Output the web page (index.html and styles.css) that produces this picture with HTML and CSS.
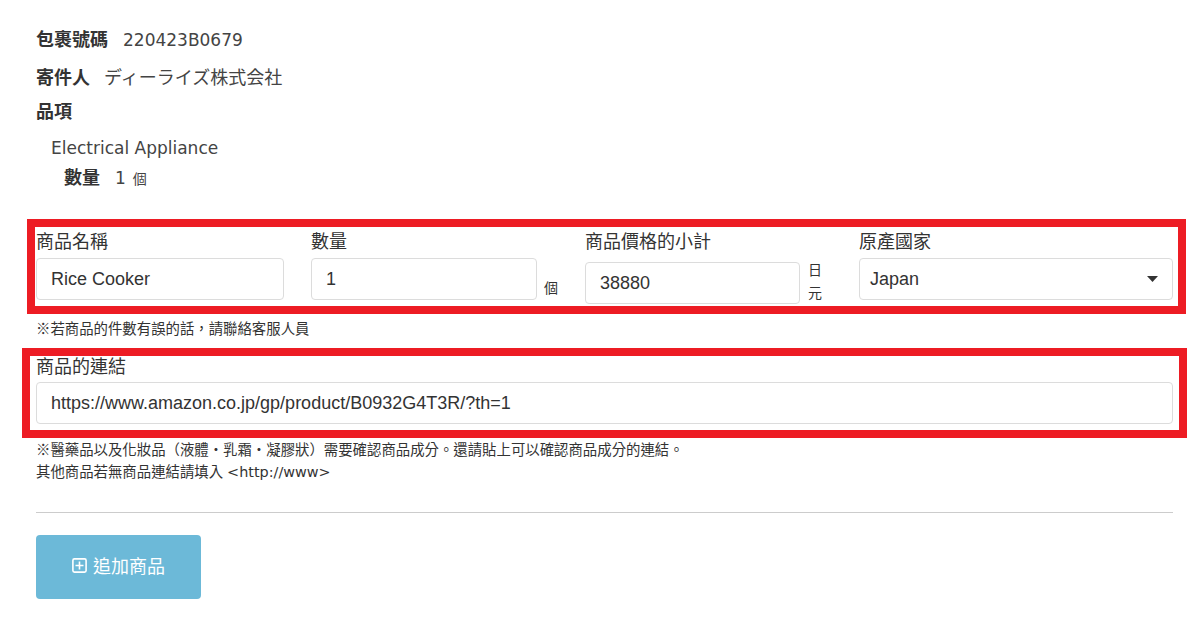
FILE: index.html
```html
<!DOCTYPE html>
<html lang="zh-Hant">
<head>
<meta charset="utf-8">
<title>商品資訊</title>
<link rel="stylesheet" href="styles.css">
</head>
<body>
<div class="page">
  <div class="info">
    <div class="info-row"><span class="k">包裹號碼</span><span class="v">220423B0679</span></div>
    <div class="info-row gap"><span class="k">寄件人</span><span class="v jp" lang="ja">ディーライズ株式会社</span></div>
    <div class="info-row gap"><span class="k">品項</span></div>
    <div class="item-name">Electrical Appliance</div>
    <div class="item-qty"><span class="k">數量</span><span class="qv">1</span><span class="qu">個</span></div>
  </div>

  <div class="hl hl-items">
    <div class="grid">
      <div class="field">
        <label class="lbl">商品名稱</label>
        <div class="ctrl"><input class="inp w1" type="text" value="Rice Cooker"></div>
      </div>
      <div class="field">
        <label class="lbl">數量</label>
        <div class="ctrl"><input class="inp w2" type="text" value="1"><span class="unit">個</span></div>
      </div>
      <div class="field">
        <label class="lbl">商品價格的小計</label>
        <div class="ctrl"><input class="inp w3" type="text" value="38880"><span class="unit unit-stack">日元</span></div>
      </div>
      <div class="field">
        <label class="lbl">原產國家</label>
        <div class="select-wrap">
          <div class="inp sel">Japan</div>
          <svg class="caret" width="11" height="6" viewBox="0 0 11 6"><path d="M0 0H11L5.5 6Z" fill="#333"/></svg>
        </div>
      </div>
    </div>
  </div>
  <div class="note note1">※若商品的件數有誤的話，請聯絡客服人員</div>

  <div class="hl hl-link">
    <label class="lbl lbl-link">商品的連結</label>
    <input class="inp wfull" type="text" value="https://www.amazon.co.jp/gp/product/B0932G4T3R/?th=1">
  </div>
  <div class="note">※醫藥品以及化妝品（液體・乳霜・凝膠狀）需要確認商品成分。還請貼上可以確認商品成分的連結。</div>
  <div class="note">其他商品若無商品連結請填入<span class="lat">&lt;http://www&gt;</span></div>

  <div class="rule"></div>

  <button class="btn" type="button">
    <svg class="plus" width="15" height="15" viewBox="0 0 15 15"><rect x="0.9" y="0.9" width="13.2" height="13.2" rx="1.5" fill="none" stroke="#fff" stroke-width="1.6"/><path d="M7.5 3.5V11.5M3.5 7.5H11.5" stroke="#fff" stroke-width="1.6"/></svg>
    <span>追加商品</span>
  </button>
</div>
</body>
</html>
```
FILE: styles.css
```css
body {
  margin: 0;
  background: #fff;
  color: #333;
  font-family: "DejaVu Sans", "Noto Sans CJK TC", sans-serif;
}

.page {
  padding: 28px 26px 0 36px;
}

.info-row {
  display: flex;
  align-items: baseline;
  font-size: 17px;
  line-height: 24px;
  height: 24px;
}

.info-row.gap {
  margin-top: 12px;
}

.k {
  font-weight: 700;
  font-size: 18px;
  color: #333;
}

.v {
  margin-left: 15px;
  color: #444;
}

.jp {
  font-family: "Noto Sans CJK JP", sans-serif;
  font-size: 18px;
  margin-left: 14px;
}

.item-name {
  margin-top: 12px;
  padding-left: 15px;
  font-size: 17px;
  line-height: 24px;
  color: #444;
}

.item-qty {
  margin-top: 6px;
  padding-left: 28px;
  display: flex;
  align-items: baseline;
  font-size: 17px;
  line-height: 24px;
}

.qv {
  margin-left: 15px;
  color: #444;
}

.qu {
  margin-left: 7px;
  font-size: 14px;
  color: #444;
  font-family: "Noto Sans CJK TC", sans-serif;
}

.hl {
  border: 8px solid #ed1c24;
}

.hl-items {
  margin: 29px -13px 0 -9px;
  padding: 3px 5px 6px 1px;
  height: 70px;
}

.grid {
  display: grid;
  grid-template-columns: 275px 274px 274px 1fr;
  align-items: start;
}

.lbl {
  display: block;
  font-family: "Liberation Sans", "Noto Sans CJK TC", sans-serif;
  font-size: 18px;
  line-height: 24px;
  height: 24px;
  margin-bottom: 4px;
  color: #333;
}

.ctrl {
  display: flex;
  align-items: flex-end;
}

.inp {
  box-sizing: border-box;
  height: 42px;
  border: 1px solid #dcdcdc;
  border-radius: 4px;
  padding: 0 14px;
  margin: 0;
  font-family: "Liberation Sans", sans-serif;
  font-size: 18px;
  color: #333;
  background: #fff;
  outline: none;
}

.w1 { width: 248px; }
.w2 { width: 226px; }
.w3 { width: 215px; }

.unit {
  margin-left: 7px;
  margin-bottom: 3px;
  font-family: "Noto Sans CJK TC", sans-serif;
  font-size: 14px;
  line-height: 20px;
  color: #333;
}

.unit-stack {
  width: 14px;
  margin-left: 8px;
  margin-bottom: 0;
  line-height: 23px;
}

.select-wrap {
  position: relative;
}

.sel {
  display: flex;
  align-items: center;
  width: 100%;
  padding-left: 10px;
}

.caret {
  position: absolute;
  right: 15px;
  top: 18px;
}

.note {
  font-family: "Noto Sans CJK TC", sans-serif;
  font-size: 14.4px;
  line-height: 22px;
  color: #333;
}

.note1 {
  margin-top: 3px;
}

.lat {
  font-family: "DejaVu Sans", sans-serif;
  margin-left: 4px;
}

.hl-link {
  margin: 9px -14px 0 -14px;
  padding: 0 6px 6px 6px;
}

.lbl-link {
  line-height: 22px;
  height: 22px;
}

.wfull {
  display: block;
  width: 100%;
}

.rule {
  margin-top: 29px;
  border-top: 1px solid #cccccc;
}

.btn {
  margin-top: 22px;
  width: 165px;
  height: 64px;
  display: flex;
  align-items: center;
  justify-content: center;
  gap: 6px;
  border: none;
  border-radius: 4px;
  background: #6cb9d8;
  color: #fff;
  font-family: "Noto Sans CJK TC", sans-serif;
  font-size: 18px;
  padding: 0 0 4px 0;
}

.plus {
  display: block;
}
```
